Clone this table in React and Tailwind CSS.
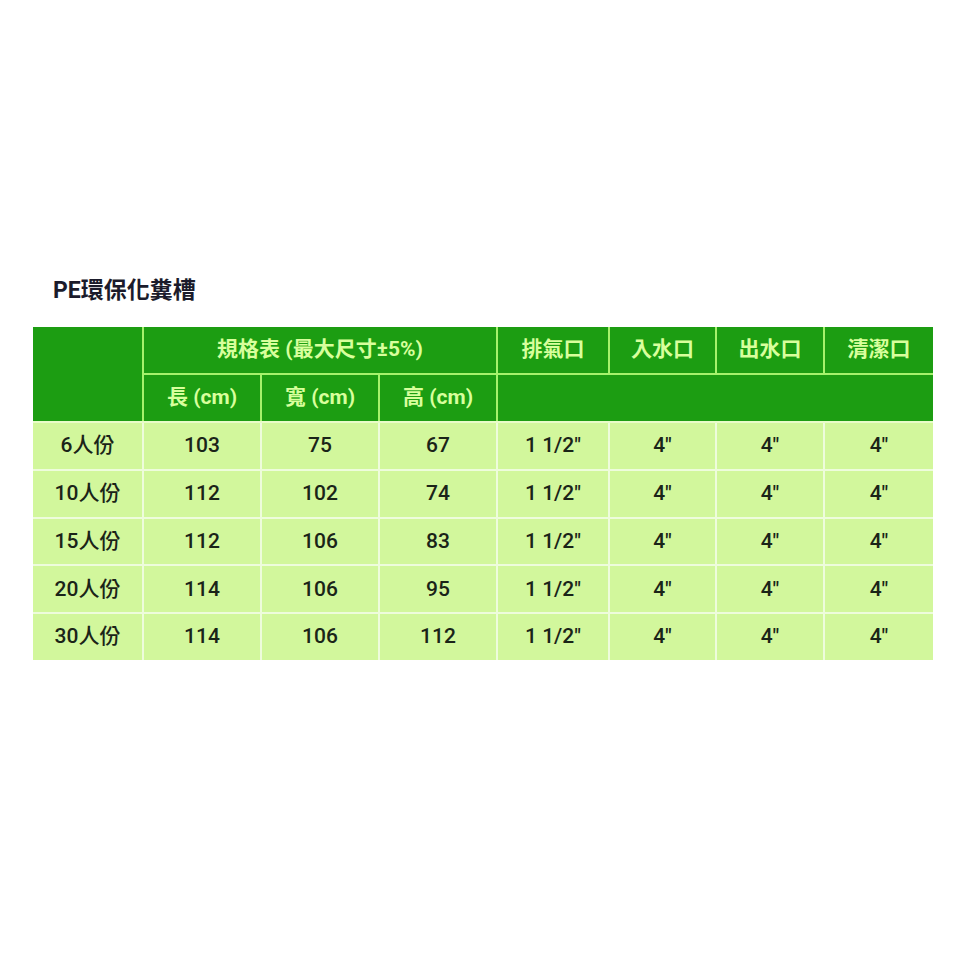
const rows = [
  ['6人份', '103', '75', '67'],
  ['10人份', '112', '102', '74'],
  ['15人份', '112', '106', '83'],
  ['20人份', '114', '106', '95'],
  ['30人份', '114', '106', '112'],
];

const cols = 'grid grid-cols-[109px_116px_116px_116px_110px_105px_106px_108px] gap-[2px]';

export default function App() {
  return (
    <div className="w-[966px] h-[966px] bg-white pt-[276px] pl-[33px] font-['Roboto','Noto_Sans_CJK_TC',sans-serif]">
      <h1 className="pl-[20px] text-[23px] font-bold leading-[30px] text-[#1b1b2b]">PE環保化糞槽</h1>

      <div className="mt-[21px] w-[900px] flex flex-col gap-[2px] bg-[#e9fcc8]">
        <div className={`${cols} bg-[#a6f26c]`}>
          <div className="row-span-2 bg-[#1c9d12]" />
          <div className="col-span-3 h-[46px] bg-[#1c9d12] flex items-center justify-center text-[21px] font-bold text-[#d8ff9c]">
            規格表 (最大尺寸±5%)
          </div>
          {['排氣口', '入水口', '出水口', '清潔口'].map((t) => (
            <div key={t} className="h-[46px] bg-[#1c9d12] flex items-center justify-center text-[21px] font-bold text-[#d8ff9c]">
              {t}
            </div>
          ))}
          {['長 (cm)', '寬 (cm)', '高 (cm)'].map((t) => (
            <div key={t} className="h-[46px] bg-[#1c9d12] flex items-center justify-center text-[21px] font-bold text-[#d8ff9c]">
              {t}
            </div>
          ))}
          <div className="col-span-4 h-[46px] bg-[#1c9d12]" />
        </div>

        <div className={`${cols} bg-[#eefcdc]`}>
          {rows.map((r) =>
            [...r, '1 1/2"', '4"', '4"', '4"'].map((v, i) => (
              <div
                key={r[0] + i}
                className="h-[45.8px] bg-[#d2f79c] flex items-center justify-center text-[21px] font-medium text-[#1a2418]"
              >
                {v}
              </div>
            ))
          )}
        </div>
      </div>
    </div>
  );
}
